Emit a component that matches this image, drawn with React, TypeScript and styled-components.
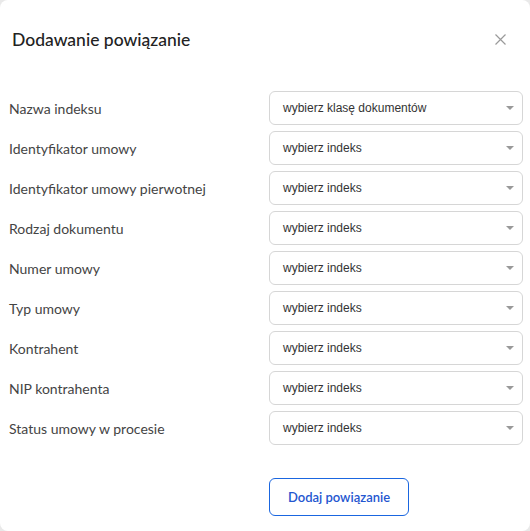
import { createGlobalStyle } from 'styled-components'
import styled from 'styled-components'

const GlobalStyle = createGlobalStyle`
  html, body {
    margin: 0;
    padding: 0;
    background: #e9e9e9;
  }
  * {
    box-sizing: border-box;
  }
`

const fields = [
  { label: 'Nazwa indeksu', placeholder: 'wybierz klasę dokumentów' },
  { label: 'Identyfikator umowy', placeholder: 'wybierz indeks' },
  { label: 'Identyfikator umowy pierwotnej', placeholder: 'wybierz indeks' },
  { label: 'Rodzaj dokumentu', placeholder: 'wybierz indeks' },
  { label: 'Numer umowy', placeholder: 'wybierz indeks' },
  { label: 'Typ umowy', placeholder: 'wybierz indeks' },
  { label: 'Kontrahent', placeholder: 'wybierz indeks' },
  { label: 'NIP kontrahenta', placeholder: 'wybierz indeks' },
  { label: 'Status umowy w procesie', placeholder: 'wybierz indeks' },
]

const App = () => {
  return (
    <>
      <GlobalStyle />
      <Modal>
        {/* Header */}
        <Header>
          <Title>Dodawanie powiązanie</Title>
          <CloseButton aria-label='zamknij'>
            <svg width='11' height='11' viewBox='0 0 11 11'>
              <path d='M0.5 0.5 L10.5 10.5 M10.5 0.5 L0.5 10.5' stroke='#9a9a9a' strokeWidth='1.2' />
            </svg>
          </CloseButton>
        </Header>

        {/* Form */}
        <Form>
          {fields.map((f) => (
            <Row key={f.label}>
              <Label>{f.label}</Label>
              <Select>
                <span>{f.placeholder}</span>
                <Caret />
              </Select>
            </Row>
          ))}
        </Form>

        <Footer>
          <AddButton>Dodaj powiązanie</AddButton>
        </Footer>
      </Modal>
    </>
  )
}

export default App

const Modal = styled.div`
  width: 530px;
  height: 531px;
  background: #fff;
  border-radius: 8px;
  font-family: Lato, 'Liberation Sans', sans-serif;
`

const Header = styled.div`
  display: flex;
  justify-content: space-between;
  align-items: center;
  height: 79px;
  padding: 0 20px 0 12px;
`

const Title = styled.h2`
  margin: 0;
  font-size: 17.5px;
  font-weight: 500;
  color: #222;
`

const CloseButton = styled.button`
  border: none;
  background: none;
  padding: 0;
  width: 20px;
  height: 20px;
  display: flex;
  align-items: center;
  justify-content: center;
  cursor: pointer;
`

const Form = styled.div`
  display: flex;
  flex-direction: column;
  gap: 6px;
  padding: 12px 0 0 9px;
`

const Row = styled.div`
  display: grid;
  grid-template-columns: 260px 254px;
  align-items: center;
`

const Label = styled.span`
  font-size: 14px;
  color: #444;
`

const Select = styled.div`
  height: 34px;
  border: 1px solid #d6d6d6;
  border-radius: 6px;
  display: flex;
  align-items: center;
  justify-content: space-between;
  padding: 0 8px 0 13px;
  font-family: 'Liberation Sans', Arial, sans-serif;
  font-size: 12px;
  color: #333;
`

const Caret = styled.span`
  width: 0;
  height: 0;
  border-left: 4px solid transparent;
  border-right: 4px solid transparent;
  border-top: 4px solid #999;
`

const Footer = styled.div`
  padding: 33px 0 0 269px;
`

const AddButton = styled.button`
  width: 140px;
  height: 38px;
  border: 1px solid #1a66e0;
  border-radius: 6px;
  background: #fff;
  color: #2456d0;
  font-family: Lato, 'Liberation Sans', sans-serif;
  font-size: 13px;
  font-weight: 600;
  cursor: pointer;
`
